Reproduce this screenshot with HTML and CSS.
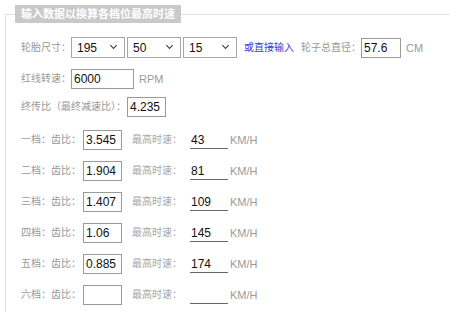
FILE: index.html
```html
<!DOCTYPE html>
<html lang="zh-CN">
<head>
    <meta charset="UTF-8">
    <meta name="viewport" content="width=device-width, initial-scale=1.0">
    <title>档位最高时速换算</title>
    <link rel="stylesheet" href="styles.css">
</head>
<body>

    <fieldset class="calc">
        <legend>输入数据以换算各档位最高时速</legend>

        <div class="row">
            <span class="label">轮胎尺寸：</span>
            <span class="select"><select><option>195</option></select></span>
            <span class="select"><select><option>50</option></select></span>
            <span class="select"><select><option>15</option></select></span>
            <a class="link" href="#">或直接输入</a>
            <span class="label">轮子总直径：</span>
            <input class="num diameter" type="text" value="57.6">
            <span class="unit">CM</span>
        </div>

        <div class="row row-rpm">
            <span class="label">红线转速：</span>
            <input class="num rpm" type="text" value="6000">
            <span class="unit">RPM</span>
        </div>

        <div class="row row-final">
            <span class="label">终传比（最终减速比）：</span>
            <input class="num ratio" type="text" value="4.235">
        </div>

        <div class="row gear">
            <span class="label">一档：齿比：</span>
            <input class="num ratio" type="text" value="3.545">
            <span class="speed-label">最高时速：</span>
            <span class="speed">43</span>
            <span class="unit">KM/H</span>
        </div>

        <div class="row gear">
            <span class="label">二档：齿比：</span>
            <input class="num ratio" type="text" value="1.904">
            <span class="speed-label">最高时速：</span>
            <span class="speed">81</span>
            <span class="unit">KM/H</span>
        </div>

        <div class="row gear">
            <span class="label">三档：齿比：</span>
            <input class="num ratio" type="text" value="1.407">
            <span class="speed-label">最高时速：</span>
            <span class="speed">109</span>
            <span class="unit">KM/H</span>
        </div>

        <div class="row gear">
            <span class="label">四档：齿比：</span>
            <input class="num ratio" type="text" value="1.06">
            <span class="speed-label">最高时速：</span>
            <span class="speed">145</span>
            <span class="unit">KM/H</span>
        </div>

        <div class="row gear">
            <span class="label">五档：齿比：</span>
            <input class="num ratio" type="text" value="0.885">
            <span class="speed-label">最高时速：</span>
            <span class="speed">174</span>
            <span class="unit">KM/H</span>
        </div>

        <div class="row gear">
            <span class="label">六档：齿比：</span>
            <input class="num ratio" type="text" value="">
            <span class="speed-label">最高时速：</span>
            <span class="speed"></span>
            <span class="unit">KM/H</span>
        </div>
    </fieldset>

</body>
</html>
```

FILE: styles.css
```css
body {
    margin: 0;
    background-color: #fff;
    font-family: "Liberation Sans", "Noto Sans CJK SC", sans-serif;
    overflow: hidden;
}
.calc {
    margin: 5px 0 0 5px;
    padding: 15px 0 0 15px;
    border: 1px solid #e2e2e2;
    border-right: none;
    min-width: 0;
}
.calc legend {
    margin-left: -6px;
    padding: 0 6px;
    height: 18px;
    line-height: 18px;
    background-color: #c9c9c9;
    color: #fff;
    font-size: 11px;
    font-weight: bold;
}
.row {
    display: flex;
    align-items: center;
    height: 20px;
    margin-bottom: 11px;
    font-size: 10px;
    line-height: 20px;
}
.row-rpm {
    margin-bottom: 8px;
}
.row-final {
    margin-bottom: 13px;
}
.label,
.speed-label {
    font-family: "Liberation Sans", "Noto Sans CJK TC", sans-serif;
}
.label {
    color: #999;
}
.row-final .label {
    margin-right: 1px;
}
.gear .label {
    margin-right: 2px;
}
.select {
    position: relative;
    margin-right: 2px;
}
.select select {
    appearance: none;
    -webkit-appearance: none;
    width: 54px;
    height: 21px;
    padding: 0 0 0 5px;
    border: 1px solid #a6a6a6;
    border-radius: 0;
    background: #fff;
    font-family: "Liberation Sans", sans-serif;
    font-size: 12px;
    color: #111;
}
.select::after {
    content: "";
    position: absolute;
    right: 9px;
    top: 6px;
    width: 4px;
    height: 4px;
    border-right: 1px solid #333;
    border-bottom: 1px solid #333;
    transform: rotate(45deg);
    pointer-events: none;
}
.link {
    margin-left: 5px;
    margin-right: 7px;
    color: #3a3ad0;
    text-decoration: none;
}
.num {
    box-sizing: border-box;
    height: 20px;
    padding: 0 2px;
    border: 1px solid #9a9a9a;
    border-radius: 0;
    font-family: "Liberation Sans", sans-serif;
    font-size: 12px;
    color: #111;
    outline: none;
}
.diameter {
    width: 40px;
}
.rpm {
    width: 63px;
}
.ratio {
    width: 39px;
}
.unit {
    margin-left: 5px;
    color: #9a9a9a;
    font-size: 11px;
}
.speed-label {
    margin-left: 10px;
    width: 58px;
    color: #a6a6a6;
}
.speed {
    box-sizing: border-box;
    width: 38px;
    height: 18px;
    line-height: 18px;
    padding-left: 1px;
    border-bottom: 1px solid #666;
    font-size: 12px;
    color: #111;
}
.gear .unit {
    margin-left: 2px;
}
```
